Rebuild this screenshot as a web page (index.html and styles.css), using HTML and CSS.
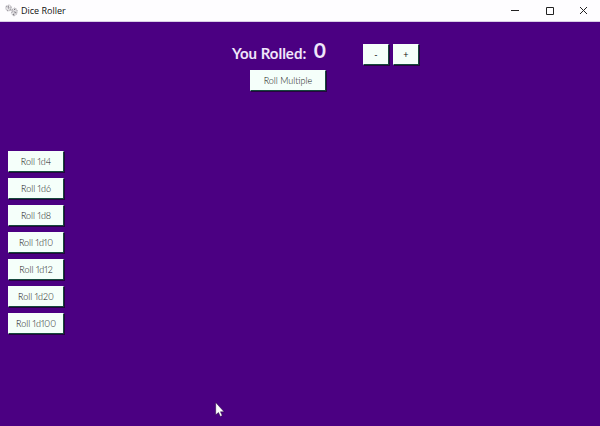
FILE: index.html
```html
<!DOCTYPE html>
<html lang="en">
<head>
<meta charset="utf-8">
<title>Dice Roller</title>
<link rel="stylesheet" href="styles.css">
</head>
<body>
<header class="titlebar">
  <svg class="app-icon" viewBox="0 0 14 14" aria-hidden="true">
    <g fill="#f0eff1" stroke="#8b8790" stroke-width="0.7" stroke-linejoin="round" stroke-dasharray="1.6 0.6">
      <path d="M1 2.5 4.5 1 7 3 6 7 2.5 7.5 1 5.5Z"/>
      <path d="M7.5 6 11 4 13.3 7 12.5 11 9.5 13 7 10.5Z"/>
      <path d="M1 2.5 4 4 7 3M4 4 2.5 7.5M7.5 6 10.5 8 13.3 7M10.5 8 9.5 13"/>
    </g>
    <path d="M8 8h1v1H8zM11 9h1v1h-1zM5 5h1v1H5zM10 5.5h1v1h-1zM3 2.4h1v1H3zM8.5 10.5h1v1h-1z" fill="#4b4650"/>
  </svg>
  <span class="app-name">Dice Roller</span>
  <div class="window-controls">
    <button class="window-button" aria-label="Minimize"><svg viewBox="0 0 9 9"><path d="M0 4.5h8"/></svg></button>
    <button class="window-button" aria-label="Maximize"><svg viewBox="0 0 9 9"><path d="M1.5 1.5h7v7h-7z"/></svg></button>
    <button class="window-button" aria-label="Close"><svg viewBox="0 0 9 9"><path d="M1 1l7 7M8 1l-7 7"/></svg></button>
  </div>
</header>
<main class="content">
  <section class="summary">
    <div class="result"><span>You Rolled:</span><output class="total">0</output></div>
    <div class="stepper">
      <button class="button step" aria-label="Decrease">-</button>
      <button class="button step" aria-label="Increase">+</button>
    </div>
    <button class="button multiple">Roll Multiple</button>
  </section>
  <nav class="dice">
    <button class="button">Roll 1d4</button>
    <button class="button">Roll 1d6</button>
    <button class="button">Roll 1d8</button>
    <button class="button">Roll 1d10</button>
    <button class="button">Roll 1d12</button>
    <button class="button">Roll 1d20</button>
    <button class="button">Roll 1d100</button>
  </nav>
</main>
<svg class="pointer" viewBox="0 0 9 14" aria-hidden="true"><path d="M.5.5v11.5l2.6-2.3 1.7 3.8 1.8-.8-1.7-3.6h3.4z" fill="#fff" stroke="#180030" stroke-width=".4"/></svg>
</body>
</html>
```
FILE: styles.css
```css
* {
  box-sizing: border-box;
}

body {
  margin: 0;
  min-height: 100vh;
  background: #4b0082;
  font-family: Lato, "Liberation Sans", sans-serif;
}

.titlebar {
  display: flex;
  align-items: center;
  height: 22px;
  padding-left: 5px;
  gap: 3px;
  background: #fefdff;
  border-bottom: 1px solid #d9cde6;
}

.app-icon {
  width: 13px;
  height: 13px;
}

.app-name {
  font-family: "Open Sans", sans-serif;
  font-size: 9px;
  line-height: 20px;
  color: #111;
}

.window-controls {
  display: flex;
  margin-left: auto;
}

.window-button {
  display: grid;
  place-items: center;
  width: 34px;
  height: 20px;
  padding: 0;
  border: 0;
  background: none;
}

.window-button svg {
  width: 9px;
  height: 9px;
  fill: none;
  stroke: #222;
  stroke-width: 1;
}

.content {
  padding: 17px 8px 8px;
}

.summary {
  display: grid;
  grid-template-columns: 96px auto;
  justify-content: start;
  align-items: center;
  column-gap: 37px;
  row-gap: 3px;
  padding-left: 38%;
}

.result {
  display: flex;
  align-items: center;
  justify-content: space-between;
  height: 28px;
  padding-left: 2px;
  color: #f0e6fa;
  font-size: 15px;
  font-weight: 700;
  line-height: 24px;
  white-space: nowrap;
}

.total {
  font-size: 21px;
  padding-bottom: 6px;
}

.stepper {
  display: flex;
  gap: 4px;
  padding-top: 3px;
}

.button {
  width: 56px;
  height: 21px;
  padding: 0;
  border: 1px solid #f5fffa;
  border-right-color: #16493d;
  border-bottom-color: #16493d;
  background: #f5fffa;
  box-shadow: 1px 1px 0 #26043f;
  color: #111;
  font-family: Lato, "Liberation Sans", sans-serif;
  font-size: 9px;
  font-weight: 300;
  font-variant-numeric: proportional-nums;
  line-height: 18px;
}

.step {
  width: 26px;
  font-weight: 400;
}

.multiple {
  justify-self: end;
  width: 76px;
}

.dice {
  display: flex;
  flex-direction: column;
  align-items: flex-start;
  gap: 6px;
  margin-top: 60px;
}

.pointer {
  position: absolute;
  left: 215px;
  top: 402px;
  width: 10px;
  height: 15px;
}
```
